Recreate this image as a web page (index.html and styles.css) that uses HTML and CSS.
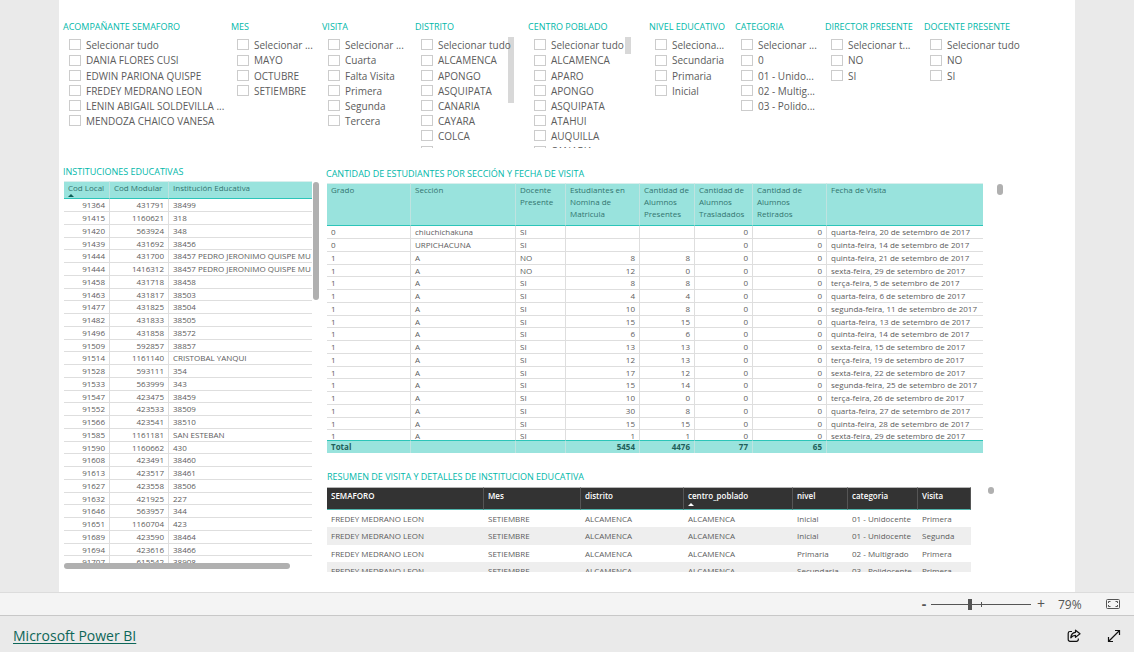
FILE: index.html
```html
<!DOCTYPE html>
<html lang="es">
<head>
<meta charset="utf-8">
<title>Microsoft Power BI</title>
<link rel="stylesheet" href="styles.css">
</head>
<body>
<main class="stage">
  <div class="canvas">
    <section class="slicers">
      <fieldset class="slicer">
        <legend class="title">ACOMPAÑANTE SEMAFORO</legend>
        <div class="options">
          <label class="option"><input type="checkbox">Selecionar tudo</label>
          <label class="option"><input type="checkbox">DANIA FLORES CUSI</label>
          <label class="option"><input type="checkbox">EDWIN PARIONA QUISPE</label>
          <label class="option"><input type="checkbox">FREDEY MEDRANO LEON</label>
          <label class="option"><input type="checkbox">LENIN ABIGAIL SOLDEVILLA ...</label>
          <label class="option"><input type="checkbox">MENDOZA CHAICO VANESA</label>
        </div>
      </fieldset>
      <fieldset class="slicer">
        <legend class="title">MES</legend>
        <div class="options">
          <label class="option"><input type="checkbox">Selecionar ...</label>
          <label class="option"><input type="checkbox">MAYO</label>
          <label class="option"><input type="checkbox">OCTUBRE</label>
          <label class="option"><input type="checkbox">SETIEMBRE</label>
        </div>
      </fieldset>
      <fieldset class="slicer">
        <legend class="title">VISITA</legend>
        <div class="options">
          <label class="option"><input type="checkbox">Selecionar ...</label>
          <label class="option"><input type="checkbox">Cuarta</label>
          <label class="option"><input type="checkbox">Falta Visita</label>
          <label class="option"><input type="checkbox">Primera</label>
          <label class="option"><input type="checkbox">Segunda</label>
          <label class="option"><input type="checkbox">Tercera</label>
        </div>
      </fieldset>
      <fieldset class="slicer">
        <legend class="title">DISTRITO</legend>
        <div class="options scrolls">
          <label class="option"><input type="checkbox">Selecionar tudo</label>
          <label class="option"><input type="checkbox">ALCAMENCA</label>
          <label class="option"><input type="checkbox">APONGO</label>
          <label class="option"><input type="checkbox">ASQUIPATA</label>
          <label class="option"><input type="checkbox">CANARIA</label>
          <label class="option"><input type="checkbox">CAYARA</label>
          <label class="option"><input type="checkbox">COLCA</label>
          <label class="option"><input type="checkbox"></label>
          <span class="list-thumb long"></span>
        </div>
      </fieldset>
      <fieldset class="slicer">
        <legend class="title">CENTRO POBLADO</legend>
        <div class="options scrolls">
          <label class="option"><input type="checkbox">Selecionar tudo</label>
          <label class="option"><input type="checkbox">ALCAMENCA</label>
          <label class="option"><input type="checkbox">APARO</label>
          <label class="option"><input type="checkbox">APONGO</label>
          <label class="option"><input type="checkbox">ASQUIPATA</label>
          <label class="option"><input type="checkbox">ATAHUI</label>
          <label class="option"><input type="checkbox">AUQUILLA</label>
          <label class="option"><input type="checkbox">CANARIA</label>
          <span class="list-thumb short"></span>
        </div>
      </fieldset>
      <fieldset class="slicer">
        <legend class="title">NIVEL EDUCATIVO</legend>
        <div class="options">
          <label class="option"><input type="checkbox">Seleciona...</label>
          <label class="option"><input type="checkbox">Secundaria</label>
          <label class="option"><input type="checkbox">Primaria</label>
          <label class="option"><input type="checkbox">Inicial</label>
        </div>
      </fieldset>
      <fieldset class="slicer">
        <legend class="title">CATEGORIA</legend>
        <div class="options">
          <label class="option"><input type="checkbox">Selecionar ...</label>
          <label class="option"><input type="checkbox">0</label>
          <label class="option"><input type="checkbox">01 - Unido...</label>
          <label class="option"><input type="checkbox">02 - Multig...</label>
          <label class="option"><input type="checkbox">03 - Polido...</label>
        </div>
      </fieldset>
      <fieldset class="slicer">
        <legend class="title">DIRECTOR PRESENTE</legend>
        <div class="options">
          <label class="option"><input type="checkbox">Selecionar t...</label>
          <label class="option"><input type="checkbox">NO</label>
          <label class="option"><input type="checkbox">SI</label>
        </div>
      </fieldset>
      <fieldset class="slicer">
        <legend class="title">DOCENTE PRESENTE</legend>
        <div class="options">
          <label class="option"><input type="checkbox">Selecionar tudo</label>
          <label class="option"><input type="checkbox">NO</label>
          <label class="option"><input type="checkbox">SI</label>
        </div>
      </fieldset>
    </section>

    <div class="visuals">
      <section class="schools">
        <h2 class="title">INSTITUCIONES EDUCATIVAS</h2>
        <div class="scroller">
          <div class="viewport schools-view">
            <table class="grid mint">
              <colgroup><col class="w-local"><col class="w-modular"><col></colgroup>
              <thead>
                <tr><th>Cod Local<span class="sort"></span></th><th>Cod Modular</th><th>Institución Educativa</th></tr>
              </thead>
              <tbody>
                <tr><td class="num">91364</td><td class="num">431791</td><td>38499</td></tr>
                <tr><td class="num">91415</td><td class="num">1160621</td><td>318</td></tr>
                <tr><td class="num">91420</td><td class="num">563924</td><td>348</td></tr>
                <tr><td class="num">91439</td><td class="num">431692</td><td>38456</td></tr>
                <tr><td class="num">91444</td><td class="num">431700</td><td>38457 PEDRO JERONIMO QUISPE MU</td></tr>
                <tr><td class="num">91444</td><td class="num">1416312</td><td>38457 PEDRO JERONIMO QUISPE MU</td></tr>
                <tr><td class="num">91458</td><td class="num">431718</td><td>38458</td></tr>
                <tr><td class="num">91463</td><td class="num">431817</td><td>38503</td></tr>
                <tr><td class="num">91477</td><td class="num">431825</td><td>38504</td></tr>
                <tr><td class="num">91482</td><td class="num">431833</td><td>38505</td></tr>
                <tr><td class="num">91496</td><td class="num">431858</td><td>38572</td></tr>
                <tr><td class="num">91509</td><td class="num">592857</td><td>38857</td></tr>
                <tr><td class="num">91514</td><td class="num">1161140</td><td>CRISTOBAL YANQUI</td></tr>
                <tr><td class="num">91528</td><td class="num">593111</td><td>354</td></tr>
                <tr><td class="num">91533</td><td class="num">563999</td><td>343</td></tr>
                <tr><td class="num">91547</td><td class="num">423475</td><td>38459</td></tr>
                <tr><td class="num">91552</td><td class="num">423533</td><td>38509</td></tr>
                <tr><td class="num">91566</td><td class="num">423541</td><td>38510</td></tr>
                <tr><td class="num">91585</td><td class="num">1161181</td><td>SAN ESTEBAN</td></tr>
                <tr><td class="num">91590</td><td class="num">1160662</td><td>430</td></tr>
                <tr><td class="num">91608</td><td class="num">423491</td><td>38460</td></tr>
                <tr><td class="num">91613</td><td class="num">423517</td><td>38461</td></tr>
                <tr><td class="num">91627</td><td class="num">423558</td><td>38506</td></tr>
                <tr><td class="num">91632</td><td class="num">421925</td><td>227</td></tr>
                <tr><td class="num">91646</td><td class="num">563957</td><td>344</td></tr>
                <tr><td class="num">91651</td><td class="num">1160704</td><td>423</td></tr>
                <tr><td class="num">91689</td><td class="num">423590</td><td>38464</td></tr>
                <tr><td class="num">91694</td><td class="num">423616</td><td>38466</td></tr>
                <tr><td class="num">91707</td><td class="num">615542</td><td>38908</td></tr>
              </tbody>
            </table>
          </div>
          <span class="thumb tall"></span>
        </div>
        <div class="thumb wide"></div>
      </section>

      <div class="details">
        <section class="students">
          <h2 class="title">CANTIDAD DE ESTUDIANTES POR SECCIÓN Y FECHA DE VISITA</h2>
          <div class="scroller">
            <div class="students-view">
              <div class="viewport students-rows">
                <table class="grid mint">
                  <colgroup><col class="w-grado"><col class="w-seccion"><col class="w-docente"><col class="w-nomina"><col class="w-presentes"><col class="w-traslado"><col class="w-retiro"><col></colgroup>
                  <thead>
                    <tr class="three-lines"><th>Grado</th><th>Sección</th><th>Docente<br>Presente</th><th>Estudiantes en<br>Nomina de<br>Matricula</th><th>Cantidad de<br>Alumnos<br>Presentes</th><th>Cantidad de<br>Alumnos<br>Trasladados</th><th>Cantidad de<br>Alumnos<br>Retirados</th><th>Fecha de Visita</th></tr>
                  </thead>
                  <tbody>
                    <tr><td>0</td><td>chiuchichakuna</td><td>SI</td><td class="num"></td><td class="num"></td><td class="num">0</td><td class="num">0</td><td>quarta-feira, 20 de setembro de 2017</td></tr>
                    <tr><td>0</td><td>URPICHACUNA</td><td>SI</td><td class="num"></td><td class="num"></td><td class="num">0</td><td class="num">0</td><td>quinta-feira, 14 de setembro de 2017</td></tr>
                    <tr><td>1</td><td>A</td><td>NO</td><td class="num">8</td><td class="num">8</td><td class="num">0</td><td class="num">0</td><td>quinta-feira, 21 de setembro de 2017</td></tr>
                    <tr><td>1</td><td>A</td><td>NO</td><td class="num">12</td><td class="num">0</td><td class="num">0</td><td class="num">0</td><td>sexta-feira, 29 de setembro de 2017</td></tr>
                    <tr><td>1</td><td>A</td><td>SI</td><td class="num">8</td><td class="num">8</td><td class="num">0</td><td class="num">0</td><td>terça-feira, 5 de setembro de 2017</td></tr>
                    <tr><td>1</td><td>A</td><td>SI</td><td class="num">4</td><td class="num">4</td><td class="num">0</td><td class="num">0</td><td>quarta-feira, 6 de setembro de 2017</td></tr>
                    <tr><td>1</td><td>A</td><td>SI</td><td class="num">10</td><td class="num">8</td><td class="num">0</td><td class="num">0</td><td>segunda-feira, 11 de setembro de 2017</td></tr>
                    <tr><td>1</td><td>A</td><td>SI</td><td class="num">15</td><td class="num">15</td><td class="num">0</td><td class="num">0</td><td>quarta-feira, 13 de setembro de 2017</td></tr>
                    <tr><td>1</td><td>A</td><td>SI</td><td class="num">6</td><td class="num">6</td><td class="num">0</td><td class="num">0</td><td>quinta-feira, 14 de setembro de 2017</td></tr>
                    <tr><td>1</td><td>A</td><td>SI</td><td class="num">13</td><td class="num">13</td><td class="num">0</td><td class="num">0</td><td>sexta-feira, 15 de setembro de 2017</td></tr>
                    <tr><td>1</td><td>A</td><td>SI</td><td class="num">12</td><td class="num">13</td><td class="num">0</td><td class="num">0</td><td>terça-feira, 19 de setembro de 2017</td></tr>
                    <tr><td>1</td><td>A</td><td>SI</td><td class="num">17</td><td class="num">12</td><td class="num">0</td><td class="num">0</td><td>sexta-feira, 22 de setembro de 2017</td></tr>
                    <tr><td>1</td><td>A</td><td>SI</td><td class="num">15</td><td class="num">14</td><td class="num">0</td><td class="num">0</td><td>segunda-feira, 25 de setembro de 2017</td></tr>
                    <tr><td>1</td><td>A</td><td>SI</td><td class="num">10</td><td class="num">0</td><td class="num">0</td><td class="num">0</td><td>terça-feira, 26 de setembro de 2017</td></tr>
                    <tr><td>1</td><td>A</td><td>SI</td><td class="num">30</td><td class="num">8</td><td class="num">0</td><td class="num">0</td><td>quarta-feira, 27 de setembro de 2017</td></tr>
                    <tr><td>1</td><td>A</td><td>SI</td><td class="num">15</td><td class="num">15</td><td class="num">0</td><td class="num">0</td><td>quinta-feira, 28 de setembro de 2017</td></tr>
                    <tr><td>1</td><td>A</td><td>SI</td><td class="num">1</td><td class="num">1</td><td class="num">0</td><td class="num">0</td><td>sexta-feira, 29 de setembro de 2017</td></tr>
                  </tbody>
                </table>
              </div>
              <table class="grid mint totals">
                <colgroup><col class="w-grado"><col class="w-seccion"><col class="w-docente"><col class="w-nomina"><col class="w-presentes"><col class="w-traslado"><col class="w-retiro"><col></colgroup>
                <tbody>
                  <tr><td>Total</td><td></td><td></td><td class="num">5454</td><td class="num">4476</td><td class="num">77</td><td class="num">65</td><td></td></tr>
                </tbody>
              </table>
            </div>
            <span class="thumb small"></span>
          </div>
        </section>

        <section class="summary">
          <h2 class="title">RESUMEN DE VISITA Y DETALLES DE INSTITUCION EDUCATIVA</h2>
          <div class="scroller">
            <div class="viewport summary-view">
              <table class="grid dark">
                <colgroup><col class="w-semaforo"><col class="w-mes"><col class="w-distrito"><col class="w-centro"><col class="w-nivel"><col class="w-categoria"><col></colgroup>
                <thead>
                  <tr><th>SEMAFORO</th><th>Mes</th><th>distrito</th><th>centro_poblado<span class="sort"></span></th><th>nivel</th><th>categoria</th><th>Visita</th></tr>
                </thead>
                <tbody>
                  <tr><td>FREDEY MEDRANO LEON</td><td>SETIEMBRE</td><td>ALCAMENCA</td><td>ALCAMENCA</td><td>Inicial</td><td>01 - Unidocente</td><td>Primera</td></tr>
                  <tr><td>FREDEY MEDRANO LEON</td><td>SETIEMBRE</td><td>ALCAMENCA</td><td>ALCAMENCA</td><td>Inicial</td><td>01 - Unidocente</td><td>Segunda</td></tr>
                  <tr><td>FREDEY MEDRANO LEON</td><td>SETIEMBRE</td><td>ALCAMENCA</td><td>ALCAMENCA</td><td>Primaria</td><td>02 - Multigrado</td><td>Primera</td></tr>
                  <tr><td>FREDEY MEDRANO LEON</td><td>SETIEMBRE</td><td>ALCAMENCA</td><td>ALCAMENCA</td><td>Secundaria</td><td>03 - Polidocente</td><td>Primera</td></tr>
                </tbody>
              </table>
            </div>
            <span class="thumb dot"></span>
          </div>
        </section>
      </div>
    </div>
  </div>
</main>

<div class="zoombar">
  <button type="button" class="step minus" aria-label="Reducir">-</button>
  <div class="slider"><input type="range" min="0" max="100" value="39" aria-label="Zoom"><span class="tick"></span></div>
  <button type="button" class="step" aria-label="Ampliar">+</button>
  <span class="percent">79%</span>
  <button type="button" class="icon fit" aria-label="Ajustar a la página">
    <svg width="16" height="12" viewBox="0 0 16 12" fill="none" stroke="#555"><rect x="1.5" y="1.5" width="13" height="9" rx="1"/><path d="M3.500 5V3.500H5.500M3.500 7V8.500H5.500M10.500 3.500H12.500V5M10.500 8.500H12.500V7"/></svg>
  </button>
</div>

<footer class="brandbar">
  <a class="brand" href="#">Microsoft Power BI</a>
  <button type="button" class="icon" aria-label="Compartir">
    <svg width="14" height="14" viewBox="0 0 14 14" fill="none" stroke="#111" stroke-width="1.200" stroke-linejoin="round"><path d="M5 2.500H3A1.800 1.800 0 0 0 1.200 4.300V10.500A1.800 1.800 0 0 0 3 12.300H9.500A1.800 1.800 0 0 0 11.300 10.500V9.500"/><path d="M8.500 1.200L13 4.800L8.500 8.400V6.300C6.200 6.300 5 7 3.800 8.800C4 5.600 5.600 3.600 8.500 3.300Z"/></svg>
  </button>
  <button type="button" class="icon" aria-label="Pantalla completa">
    <svg width="14" height="14" viewBox="0 0 14 14" fill="none" stroke="#111" stroke-width="1.200"><path d="M1.500 12.500L12.500 1.500M8 1.500H12.500V6M1.500 8V12.500H6"/></svg>
  </button>
</footer>
</body>
</html>
```
FILE: styles.css
```css
* { box-sizing: border-box; }

body {
  margin: 0;
  min-height: 100vh;
  display: flex;
  flex-direction: column;
  background: #eaeaea;
  color: #5c5c5c;
  font-family: "Open Sans", "Noto Sans", sans-serif;
}

button { border: 0; padding: 0; background: none; font: inherit; color: inherit; }

.stage { flex: 1; display: flex; padding: 0 59px; }
.canvas { flex: 1; min-width: 0; background: #fff; padding: 20px 0 0 4px; }

.title {
  margin: 0;
  padding: 0;
  font-size: 9px;
  font-weight: 400;
  line-height: 14px;
  color: #01b8aa;
  white-space: nowrap;
}

/* Filters */
.slicers {
  display: grid;
  grid-template-columns: 168fr 91fr 93fr 113fr 121fr 86fr 90fr 99fr 151fr;
  height: 145px;
}
.slicer { border: 0; margin: 0; padding: 0; min-width: 0; }
.options { position: relative; isolation: isolate; padding: 3px 0 0 6px; }
.scrolls { height: 114px; overflow: hidden; }
.option {
  display: flex;
  align-items: center;
  gap: 5px;
  height: 15px;
  font-size: 10px;
  white-space: nowrap;
}
.option:nth-child(6n + 2) { height: 16px; }
.option input {
  appearance: none;
  flex: none;
  width: 12px;
  height: 11px;
  margin: 0;
  border: 1px solid #ccc;
  background: #fff;
}
.list-thumb { position: absolute; z-index: -1; top: 3px; width: 6px; background: #d8d8d8; }
.long { left: 93px; height: 66px; }
.short { left: 97px; height: 17px; }

/* Tables */
.visuals { display: grid; grid-template-columns: 263fr 749fr; }
.scroller { display: flex; }
.viewport { overflow: hidden; }

.grid {
  width: 100%;
  table-layout: fixed;
  border-collapse: separate;
  border-spacing: 0;
  font-size: 8px;
  line-height: 10px;
}
.grid th, .grid td {
  padding: 0 4px;
  text-align: left;
  white-space: nowrap;
  font-weight: 400;
}
.grid td:last-child { padding-right: 0; }
.grid .num { text-align: right; }

.mint th {
  position: relative;
  height: 18px;
  padding-top: 1px;
  vertical-align: top;
  background: #99e3dd;
  border-top: 1px solid #d8efed;
  border-bottom: 1px solid #2cc5b9;
  border-right: 1px solid #bfe3e0;
  color: #33756f;
}
.mint td { height: 13px; border-right: 1px solid #dedede; border-bottom: 1px solid #dedede; }
.mint tr:nth-child(4n) td { height: 12px; }
.mint th:last-child, .mint td:last-child { border-right: 0; }
.mint .three-lines th { height: 43px; padding-top: 0; line-height: 12px; }

.sort {
  position: absolute;
  left: 4px;
  bottom: 1px;
  border: 3px solid transparent;
  border-top: 0;
  border-bottom: 3px solid #0d5f58;
}

.totals td {
  font-weight: 700;
  background: #99e3dd;
  border-top: 1px solid #2cc5b9;
  border-bottom: 0;
  border-right-color: #bfe3e0;
  color: #1f5f5a;
}

.thumb { flex: none; border-radius: 3px; background: #b0b0b0; }
.tall { width: 6px; height: 118px; margin: 1px 0 0 1px; }
.wide { width: 226px; height: 6px; margin-left: 1px; }
.small { width: 6px; height: 11px; margin: 1px 0 0 14px; }
.dot { width: 6px; height: 7px; margin-left: 17px; }

.schools .title { margin-bottom: 2px; }
.schools-view { width: 249px; height: 382px; padding-left: 1px; }
.w-local { width: 46px; }
.w-modular { width: 59px; }

.students .title { margin: 2px 0; }
.students-view { width: 657px; padding-left: 1px; }
.students-rows { height: 257px; }
.w-grado { width: 84px; }
.w-seccion { width: 105px; }
.w-docente { width: 50px; }
.w-nomina { width: 74px; }
.w-presentes { width: 55px; }
.w-traslado { width: 58px; }
.w-retiro { width: 74px; }

.summary { padding: 17px 0 0 1px; }
.summary .title { margin-bottom: 3px; }
.summary-view { width: 644px; height: 85px; }
.w-semaforo { width: 157px; }
.w-mes { width: 97px; }
.w-distrito { width: 103px; }
.w-centro { width: 109px; }
.w-nivel { width: 55px; }
.w-categoria { width: 70px; }

.dark th {
  position: relative;
  height: 23px;
  padding-top: 3px;
  vertical-align: top;
  background: #333;
  border-top: 1px solid #b5b5b5;
  border-bottom: 1px solid #4fb5ad;
  border-right: 1px solid #555;
  color: #fff;
  font-weight: 600;
}
.dark .sort { bottom: 3px; border-bottom-color: #fff; }
.dark td { height: 17px; }
.dark tr:nth-child(even) td { height: 18px; background: #eee; }

/* Zoom bar */
.zoombar {
  display: flex;
  align-items: center;
  justify-content: flex-end;
  height: 24px;
  padding-right: 13px;
  background: #f4f4f4;
  border-top: 1px solid #dcdcdc;
  border-bottom: 1px solid #c8c8c8;
  color: #555;
  font-size: 12px;
}
.step { width: 12px; line-height: 20px; font-size: 14px; text-align: center; }
.minus { font-weight: 700; }
.slider { position: relative; display: flex; width: 100px; margin: 0 4px 0 1px; }
.slider input { appearance: none; width: 100%; height: 12px; margin: 0; background: linear-gradient(#555, #555) center / 100% 1px no-repeat; }
.slider input::-webkit-slider-thumb { appearance: none; width: 4px; height: 11px; background: #555; }
.tick { position: absolute; left: 50px; top: 4px; width: 1px; height: 5px; background: #555; }
.percent { width: 36px; padding-left: 11px; }
.icon { display: flex; }
.fit { margin-left: 22px; }

/* Footer */
.brandbar { display: flex; align-items: center; height: 36px; gap: 26px; padding: 3px 13px 0; }
.brand { margin-right: auto; font-size: 14px; line-height: 20px; color: #0d6658; text-underline-offset: 2px; text-decoration-thickness: 1px; }
```
